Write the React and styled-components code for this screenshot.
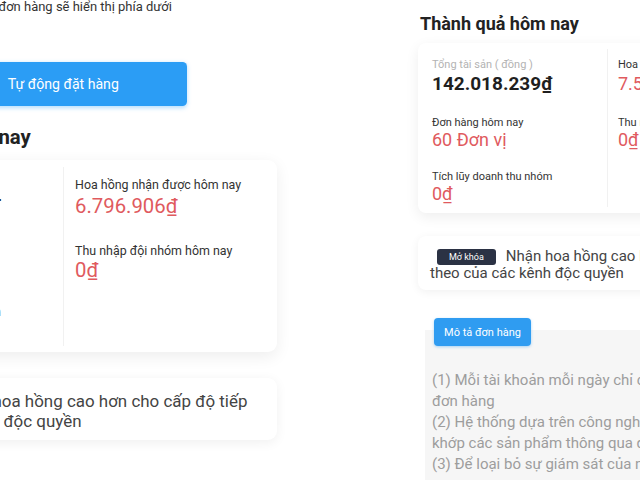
import React from 'react';
import styled, { createGlobalStyle } from 'styled-components';

const GlobalStyle = createGlobalStyle`
  body {
    margin: 0;
    background: #ffffff;
    font-family: Roboto, "Noto Sans", Arial, sans-serif;
  }
`;

const Page = styled.div`
  display: flex;
  width: 640px;
  height: 480px;
  overflow: hidden;
  background: #ffffff;
`;

const Viewport = styled.div`
  display: flex;
  justify-content: ${(p) => (p.$alignEnd ? 'flex-end' : 'flex-start')};
  flex: ${(p) => (p.$width ? `0 0 ${p.$width}px` : '1 1 auto')};
  margin-left: ${(p) => p.$offset || 0}px;
  height: 480px;
  overflow: hidden;
`;

const Screen = styled.div`
  flex: 0 0 403px;
  width: 403px;
  box-sizing: border-box;
  padding: ${(p) => p.$top}px 12px 0;
  zoom: ${(p) => p.$scale || 1};
  display: flex;
  flex-direction: column;
`;

const Notice = styled.p`
  margin: 0;
  font-size: 11.5px;
  line-height: 12px;
  color: #333;
  text-align: center;
  white-space: nowrap;
`;

const AutoButton = styled.button`
  display: block;
  width: 219px;
  height: 39px;
  margin: 43px auto 0;
  border: none;
  border-radius: 4px;
  background: #2b9df5;
  color: #fff;
  font-family: inherit;
  font-size: 12.5px;
  box-shadow: 0 1px 4px rgba(43, 157, 245, 0.35);
`;

const Heading = styled.h2`
  margin: ${(p) => p.$gap || 0}px 0 0 2px;
  font-size: 18px;
  line-height: 26px;
  font-weight: 700;
  color: #222;
`;

const StatsCard = styled.div`
  display: grid;
  grid-template-columns: 189px 1fr;
  margin-top: ${(p) => p.$gap}px;
  background: #fff;
  border-radius: 8px;
  box-shadow: 0 4px 14px rgba(0, 0, 0, 0.07);
`;

const StatsColumn = styled.div`
  display: flex;
  flex-direction: column;
  gap: 20px;
  padding: 15px 10px 9px ${(p) => (p.$divider ? 10 : 14)}px;
  border-left: ${(p) => (p.$divider ? '1px solid #f1f1f1' : 'none')};
  margin: ${(p) => (p.$divider ? '6px 0' : '0')};
  padding-top: ${(p) => (p.$divider ? 9 : 15)}px;
  white-space: nowrap;
  overflow: hidden;
`;

const Stat = styled.div`
  display: flex;
  flex-direction: column;
`;

const StatLabel = styled.span`
  font-size: 11px;
  line-height: 14px;
  color: ${(p) => (p.$muted ? '#b3b3b3' : '#333')};
`;

const StatValue = styled.span`
  font-size: ${(p) => (p.$strong ? 19 : 18)}px;
  line-height: ${(p) => (p.$big ? 24 : 20)}px;
  font-weight: ${(p) => (p.$strong ? 700 : 400)};
  color: ${(p) => (p.$strong ? '#1f1f1f' : '#e05a5e')};
`;

const UnlockCard = styled.div`
  margin-top: 23px;
  padding: 12px 12px 8px 12px;
  background: #fff;
  border-radius: 8px;
  box-shadow: 0 2px 10px rgba(0, 0, 0, 0.06);
  font-size: 15px;
  line-height: 17px;
  color: #444;
`;

const Badge = styled.span`
  display: inline-block;
  margin: 0 10px 0 7px;
  padding: 0 12px;
  height: 16px;
  line-height: 16px;
  border-radius: 3px;
  background: #2b3244;
  color: #fff;
  font-size: 9px;
  vertical-align: 1px;
`;

const DescPanel = styled.div`
  margin: 28px 0 0 7px;
  padding: 0 9px 20px 7px;
  background: linear-gradient(to bottom, transparent 12px, #f6f6f6 12px);
`;

const DescButton = styled.button`
  display: block;
  width: 97px;
  height: 28px;
  margin-left: 2px;
  border: none;
  border-radius: 4px;
  background: #2f9cf1;
  color: #fff;
  font-family: inherit;
  font-size: 11px;
  box-shadow: 0 1px 3px rgba(47, 156, 241, 0.4);
`;

const Rules = styled.div`
  margin-top: 24px;
  font-size: 15px;
  line-height: 21px;
  color: #9d9d9d;
  white-space: nowrap;
`;

const stats = {
  left: [
    { label: 'Tổng tài sản ( đồng )', value: '142.018.239₫', muted: true, strong: true },
    { label: 'Đơn hàng hôm nay', value: '60 Đơn vị' },
    { label: 'Tích lũy doanh thu nhóm', value: '0₫' },
  ],
  right: [
    { label: 'Hoa hồng nhận được hôm nay', value: '7.564.218₫' },
    { label: 'Thu nhập đội nhóm hôm nay', value: '0₫' },
  ],
};

const earlierStats = {
  ...stats,
  right: [{ ...stats.right[0], value: '6.796.906₫' }, stats.right[1]],
};

const Stats = ({ data, gap }) => (
  <StatsCard $gap={gap}>
    <StatsColumn>
      {data.left.map((s, i) => (
        <Stat key={s.label}>
          <StatLabel $muted={s.muted}>{s.label}</StatLabel>
          <StatValue $strong={s.strong} $big={i === 0}>{s.value}</StatValue>
        </Stat>
      ))}
    </StatsColumn>
    <StatsColumn $divider>
      {data.right.map((s, i) => (
        <Stat key={s.label}>
          <StatLabel>{s.label}</StatLabel>
          <StatValue $big={i === 0}>{s.value}</StatValue>
        </Stat>
      ))}
    </StatsColumn>
  </StatsCard>
);

const Unlock = () => (
  <UnlockCard>
    <Badge>Mở khóa</Badge>Nhận hoa hồng cao hơn cho cấp độ tiếp
    <br />
    theo của các kênh độc quyền
  </UnlockCard>
);

const App = () => (
  <>
    <GlobalStyle />
    <Page>
      <Viewport $width={291} $alignEnd>
        <Screen $scale={1.13} $top={0}>
          <Notice>Chi tiết đơn hàng sẽ hiển thị phía dưới</Notice>
          <AutoButton>Tự động đặt hàng</AutoButton>
          <Heading $gap={15}>Thành quả hôm nay</Heading>
          <Stats data={earlierStats} gap={7} />
          <Unlock />
        </Screen>
      </Viewport>
      <Viewport $offset={115}>
        <Screen $top={11}>
          <Heading>Thành quả hôm nay</Heading>
          <Stats data={stats} gap={6} />
          <Unlock />
          <DescPanel>
            <DescButton>Mô tả đơn hàng</DescButton>
            <Rules>
              (1) Mỗi tài khoản mỗi ngày chỉ có thể khớp tối đa 60
              <br />
              đơn hàng
              <br />
              (2) Hệ thống dựa trên công nghệ đám mây LBS, tự động
              <br />
              khớp các sản phẩm thông qua đám mây thông minh
              <br />
              (3) Để loại bỏ sự giám sát của nền tảng, nếu đơn hàng
            </Rules>
          </DescPanel>
        </Screen>
      </Viewport>
    </Page>
  </>
);

export default App;
